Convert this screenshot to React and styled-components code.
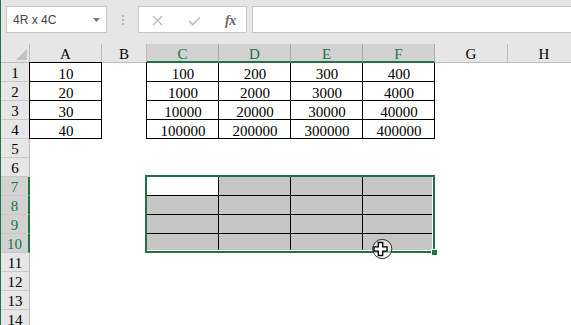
import React from 'react';
import styled, { createGlobalStyle } from 'styled-components';

const GREEN = '#217346';

const GlobalStyle = createGlobalStyle`
  html, body { margin: 0; padding: 0; background: #fff; overflow: hidden; }
  #root { width: 571px; height: 325px; }
`;

const Window = styled.div`
  width: 571px;
  height: 325px;
  box-sizing: border-box;
  border-left: 1px solid ${GREEN};
  background: #fff;
  overflow: hidden;
  display: flex;
  flex-direction: column;
`;

const FormulaBar = styled.div`
  flex: 0 0 44px;
  box-sizing: border-box;
  background: #e6e6e6;
  display: flex;
  align-items: flex-start;
  padding: 6px 0 0 5px;
`;

const NameBox = styled.div`
  width: 101px;
  height: 27px;
  box-sizing: border-box;
  border: 1px solid #c6c6c6;
  background: #fff;
  display: flex;
  align-items: center;
  justify-content: space-between;
  padding: 0 6px;
  font: 12px "Liberation Sans", Arial, sans-serif;
  color: #444;
`;

const Grip = styled.div`
  width: 31px;
  display: flex;
  flex-direction: column;
  align-items: center;
  gap: 2px;
  padding-top: 9px;
`;

const GripDot = styled.span`
  width: 2px;
  height: 2px;
  background: #b4b4b4;
`;

const FxBox = styled.div`
  width: 109px;
  height: 27px;
  box-sizing: border-box;
  border: 1px solid #c6c6c6;
  background: #fff;
  display: flex;
  align-items: center;
  gap: 25px;
  padding: 2px 0 0 13px;
`;

const FxLabel = styled.span`
  font: italic 600 14px "Liberation Serif", "Times New Roman", serif;
  color: #6a6a6a;
  letter-spacing: -0.5px;
  margin-left: -1px;
`;

const FormulaInput = styled.div`
  flex: 1;
  height: 27px;
  box-sizing: border-box;
  margin: 0 -3px 0 5px;
  border: 1px solid #c6c6c6;
  background: #fff;
`;

const Sheet = styled.div`
  position: relative;
  display: grid;
  grid-template-columns: 29px 72px 45px 72px 72px 72px 72px 73px 73px;
  grid-auto-rows: 19px;
  font-family: "Liberation Serif", "Times New Roman", serif;
  font-size: 15px;
  color: #000;
`;

const Corner = styled.div`
  grid-row: 1;
  grid-column: 1;
  box-sizing: border-box;
  background: #e6e6e6;
  border-right: 1px solid #bcbcbc;
  border-bottom: 1px solid #bcbcbc;
  display: flex;
  justify-content: flex-end;
  align-items: flex-end;
  padding: 0 2px 2px 0;
`;

const ColHeader = styled.div`
  grid-row: 1;
  grid-column: ${(p) => p.$col};
  box-sizing: border-box;
  position: relative;
  z-index: ${(p) => (p.$sel ? 2 : 'auto')};
  background: ${(p) => (p.$sel ? '#d2d2d2' : '#e6e6e6')};
  color: ${(p) => (p.$sel ? GREEN : '#000')};
  border-right: 1px solid ${(p) => (p.$sel ? '#a8a8a8' : '#bcbcbc')};
  border-bottom: ${(p) => (p.$sel ? `2px solid ${GREEN}` : '1px solid #bcbcbc')};
  display: flex;
  justify-content: center;
  align-items: flex-start;
  padding-top: 1px;
  line-height: 18px;
`;

const RowHeader = styled.div`
  grid-row: ${(p) => p.$row};
  grid-column: 1;
  box-sizing: border-box;
  background: ${(p) => (p.$sel ? '#d2d2d2' : '#e6e6e6')};
  color: ${(p) => (p.$sel ? GREEN : '#000')};
  border-right: ${(p) => (p.$sel ? `2px solid ${GREEN}` : '1px solid #bcbcbc')};
  border-bottom: 1px solid #c8c8c8;
  display: flex;
  justify-content: center;
  align-items: flex-start;
  padding-top: 1px;
  line-height: 18px;
`;

const Cell = styled.div`
  grid-row: ${(p) => p.$row};
  grid-column: ${(p) => p.$col};
  box-sizing: border-box;
  position: relative;
  background: ${(p) => (p.$fill ? '#c6c6c6' : '#fff')};
  display: flex;
  justify-content: center;
  align-items: flex-start;
  padding-top: 2px;
  line-height: 18px;
  white-space: nowrap;

  &::after {
    content: '';
    display: ${(p) => (p.$boxed ? 'block' : 'none')};
    position: absolute;
    top: -1px;
    left: -1px;
    right: 0;
    bottom: 0;
    border: 1px solid #000;
    z-index: 1;
    pointer-events: none;
  }
`;

const Selection = styled.div`
  grid-column: 4 / 8;
  grid-row: 8 / 12;
  margin: -2px 0 0 -2px;
  position: relative;
  z-index: 3;
  border: 2px solid ${GREEN};
  box-shadow: inset -1px -1px 0 #fff;
  pointer-events: none;
`;

const FillHandle = styled.span`
  position: absolute;
  right: -5px;
  bottom: -5px;
  width: 5px;
  height: 5px;
  background: ${GREEN};
  border: 1px solid #fff;
`;

const Cursor = styled.svg`
  position: absolute;
  left: 369px;
  top: 193px;
  z-index: 4;
`;

const COLS = ['A', 'B', 'C', 'D', 'E', 'F', 'G', 'H'];
const SEL_COLS = ['C', 'D', 'E', 'F'];

const DATA = {
  1: { A: '10', C: '100', D: '200', E: '300', F: '400' },
  2: { A: '20', C: '1000', D: '2000', E: '3000', F: '4000' },
  3: { A: '30', C: '10000', D: '20000', E: '30000', F: '40000' },
  4: { A: '40', C: '100000', D: '200000', E: '300000', F: '400000' },
};

const ROWS = Array.from({ length: 14 }, (_, i) => i + 1);

function cellProps(r, c) {
  const inTable = r <= 4 && (c === 'A' || SEL_COLS.includes(c));
  const inSel = r >= 7 && r <= 10 && SEL_COLS.includes(c);
  return {
    $boxed: inTable || inSel,
    $fill: inSel && !(r === 7 && c === 'C'),
  };
}

export default function App() {
  return (
    <>
      <GlobalStyle />
      <Window>
        <FormulaBar>
          <NameBox>
            <span>4R x 4C</span>
            <svg width="7" height="4" viewBox="0 0 7 4">
              <polygon points="0,0 7,0 3.5,4" fill="#7a7a7a" />
            </svg>
          </NameBox>
          <Grip>
            <GripDot />
            <GripDot />
            <GripDot />
          </Grip>
          <FxBox>
            <svg width="11" height="11" viewBox="0 0 11 11">
              <path d="M1 1 L10 10 M10 1 L1 10" stroke="#bcbcbc" strokeWidth="1.4" fill="none" />
            </svg>
            <svg width="13" height="10" viewBox="0 0 13 10">
              <path d="M1 5 L4.8 8.6 L12 1.2" stroke="#bcbcbc" strokeWidth="1.6" fill="none" />
            </svg>
            <FxLabel>fx</FxLabel>
          </FxBox>
          <FormulaInput />
        </FormulaBar>

        <Sheet>
          <Corner>
            <svg width="11" height="11" viewBox="0 0 11 11">
              <polygon points="11,0 11,11 0,11" fill="#c2c2c2" />
            </svg>
          </Corner>
          {COLS.map((c, ci) => (
            <ColHeader key={c} $col={ci + 2} $sel={SEL_COLS.includes(c)}>
              {c}
            </ColHeader>
          ))}
          {ROWS.map((r) => (
            <React.Fragment key={r}>
              <RowHeader $row={r + 1} $sel={r >= 7 && r <= 10}>
                {r}
              </RowHeader>
              {COLS.map((c, ci) => (
                <Cell key={c} $row={r + 1} $col={ci + 2} {...cellProps(r, c)}>
                  {DATA[r]?.[c] ?? ''}
                </Cell>
              ))}
            </React.Fragment>
          ))}
          <Selection>
            <FillHandle />
          </Selection>
          <Cursor width="24" height="24" viewBox="0 0 24 24">
            <circle cx="12.3" cy="12" r="9.6" fill="rgba(255,255,255,0.55)" stroke="#2a2a2a" strokeWidth="1" />
            <polygon
              points="8.3,5.5 12.7,5.5 12.7,9.8 17,9.8 17,14.2 12.7,14.2 12.7,18.5 8.3,18.5 8.3,14.2 4,14.2 4,9.8 8.3,9.8"
              fill="#fff"
              stroke="#000"
              strokeWidth="1.3"
              strokeLinejoin="miter"
            />
          </Cursor>
        </Sheet>
      </Window>
    </>
  );
}
